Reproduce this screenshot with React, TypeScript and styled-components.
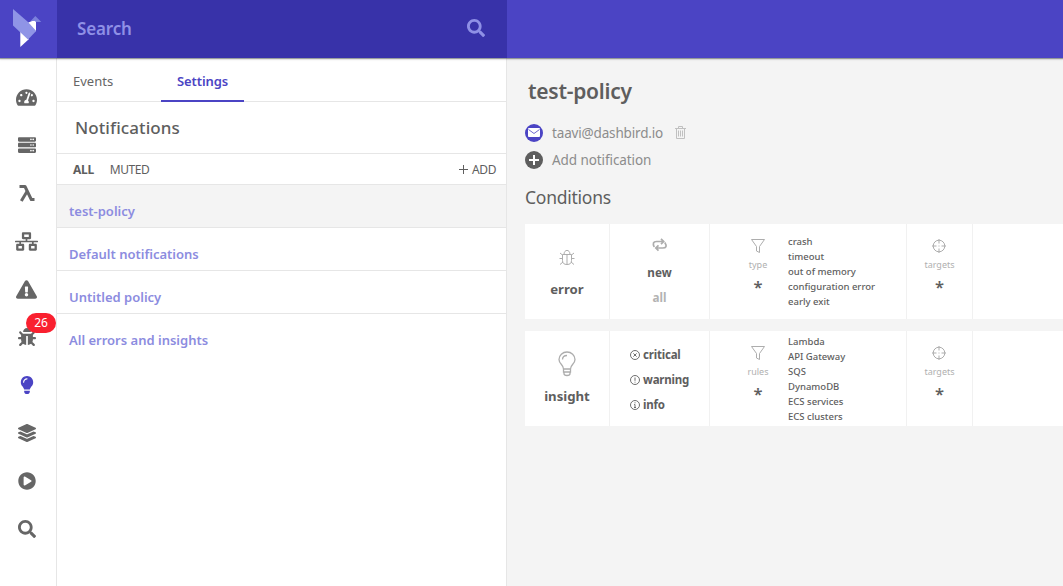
import React from "react";
import styled, { createGlobalStyle } from "styled-components";
import {
  FaTachometerAlt, FaServer, FaNetworkWired, FaExclamationTriangle, FaBug,
  FaLightbulb, FaLayerGroup, FaPlayCircle, FaSearch,
} from "react-icons/fa";

const GlobalStyle = createGlobalStyle`
  * { box-sizing: border-box; }
  html, body, #root { height: 100%; }
  body { margin: 0; overflow: hidden; background: #f4f4f4; color: #5e5e5e;
    font-family: "Noto Sans", "Open Sans", sans-serif; }
  svg { display: block; flex: none; }
`;

const Page = styled.div`
  height: 100vh;
  display: flex;
  flex-direction: column;
`;
const Header = styled.header`
  position: relative;
  z-index: 1;
  height: 58px;
  flex: none;
  display: flex;
  background: #4b44c4;
  box-shadow: 0 1px 1px rgba(70, 80, 80, 0.5), 0 2px 2px rgba(0, 0, 0, 0.08);
`;
const Brand = styled.div`
  width: 57px;
  padding: 9px 0 0 13px;
`;
const SearchBar = styled.div`
  width: 450px;
  display: flex;
  align-items: center;
  justify-content: space-between;
  padding: 0 22px 2px 20px;
  background: #3832a9;
  color: #8f90e6;
`;
const Body = styled.div`
  flex: 1;
  display: flex;
  min-height: 0;
`;
const Nav = styled.nav`
  width: 57px;
  padding: 15px 3px 0 0;
  border-right: 1px solid #e6e6e6;
  background: #fff;
`;
const NavItem = styled.a<{ $active?: boolean }>`
  position: relative;
  height: 48px;
  display: flex;
  align-items: center;
  justify-content: center;
  color: ${(p) => (p.$active ? "#4b44c4" : "#666")};
`;
const Badge = styled.span`
  position: absolute;
  left: 26px;
  top: 0;
  width: 30px;
  height: 20px;
  border-radius: 10px;
  background: #f9202f;
  color: #fff;
  font-size: 12px;
  line-height: 20px;
  text-align: center;
`;
const Sidebar = styled.aside`
  width: 450px;
  border-right: 1px solid #e6e6e6;
  background: #fff;
`;
const Tabs = styled.div`
  height: 44px;
  display: flex;
  border-bottom: 1px solid #e6e6e6;
`;
const Tab = styled.div<{ $active?: boolean }>`
  width: ${(p) => (p.$active ? 83 : 104)}px;
  height: 44px;
  padding: 0 16px;
  line-height: 44px;
  border-bottom: ${(p) => (p.$active ? "2px solid #4b44c4" : "0")};
  color: ${(p) => (p.$active ? "#4b44c4" : "#666")};
`;
const SectionTitle = styled.div`
  height: 52px;
  padding-left: 18px;
  line-height: 51px;
  border-bottom: 1px solid #e6e6e6;
`;
const Filters = styled.div`
  height: 31px;
  display: flex;
  gap: 16px;
  align-items: center;
  padding: 0 10px 0 16px;
  border-bottom: 1px solid #e6e6e6;
`;
const AddButton = styled.div`
  display: flex;
  align-items: center;
  gap: 4px;
  margin-left: auto;
`;
const PolicyRow = styled.div<{ $selected?: boolean; $last?: boolean }>`
  height: 43px;
  padding: 5px 12px 0;
  line-height: 41px;
  border-bottom: 1px solid ${(p) => (p.$last ? "transparent" : "#e6e6e6")};
  background: ${(p) => (p.$selected ? "#f4f4f4" : "#fff")};
  color: #8c8ce0;
`;
const Main = styled.main`
  flex: 1;
  min-width: 0;
  padding: 17px 0 0 18px;
`;
const PolicyTitle = styled.h1`
  margin: 0 0 12px 3px;
  height: 32px;
  line-height: 32px;
  font-size: 21px;
`;
const Contact = styled.div`
  height: 27px;
  display: flex;
  align-items: center;
  gap: 9px;
  color: #8c8c8c;
`;
const Remove = styled.span`
  margin-left: 3px;
`;
const Round = styled.span<{ $fill: string }>`
  width: 18px;
  height: 18px;
  border-radius: 50%;
  display: flex;
  align-items: center;
  justify-content: center;
  background: ${(p) => p.$fill};
`;
const ConditionsTitle = styled.h2`
  margin: 10px 0 13px;
  height: 28px;
  line-height: 28px;
  font-size: 17px;
`;
const Card = styled.section`
  height: 95px;
  margin-bottom: 12px;
  display: flex;
  background: #fff;
`;
const Cell = styled.div<{ $width: number; $top?: number }>`
  width: ${(p) => p.$width}px;
  padding-top: ${(p) => p.$top ?? 0}px;
  border-right: 1px solid #f1f1f1;
  display: flex;
  flex-direction: column;
  align-items: center;
`;
const SplitCell = styled(Cell)`
  flex-direction: row;
  align-items: flex-start;
`;
const FilterColumn = styled.div`
  width: 78px;
  padding: 14px 0 0 18px;
  display: flex;
  flex-direction: column;
  align-items: center;
`;
const RuleList = styled.div<{ $top: number }>`
  padding-top: ${(p) => p.$top}px;
  white-space: nowrap;
`;
const Severity = styled.div`
  height: 25px;
  width: 59px;
  display: flex;
  align-items: center;
  gap: 3px;
`;
const Line = styled.div<{ $h: number }>`
  height: ${(p) => p.$h}px;
  line-height: ${(p) => p.$h}px;
  font-size: 9px;
`;
const Text = styled.span<{ $size: number; $weight?: number; $track?: number; $color?: string }>`
  font-size: ${(p) => p.$size}px;
  font-weight: ${(p) => p.$weight ?? 400};
  letter-spacing: ${(p) => p.$track ?? 0}px;
  color: ${(p) => p.$color ?? "inherit"};
  white-space: nowrap;
`;

const Logo = () => (
  <svg width="30" height="39" viewBox="0 0 30 39">
    <path d="M7.300 21V38l8.700-8z" fill="#fff" />
    <path d="M14.500 14 20 11.500H23v11z" fill="#fff" />
    <path d="M0 0 15 13 23.200 22 15 30.500 0 16.500z" fill="#8f94e6" />
    <path d="M17.500 12.200 22.300 7 28.300 13H23l-1.500-1.200z" fill="#7b80dc" />
  </svg>
);
const Lambda = () => (
  <svg width="16" height="18" viewBox="0 0 16 18" fill="none" stroke="currentColor" strokeWidth="3">
    <path d="M.5 2.500H6L12.300 15.500H15.500" strokeLinejoin="round" />
    <path d="M8 7.500 2.300 17" />
  </svg>
);
const BugOutline = () => (
  <svg width="16" height="17" viewBox="0 0 16 17" fill="none" stroke="#adadad">
    <path d="M3.500 5.500h9v6q0 4-4.500 4t-4.500-4zM8 6v9.500M5 5.500C5 0 11 0 11 5.500M.5 9.500h3m9 0h3M1 4l2.500 2M15 4l-2.500 2M1 15.500 4 13m11 2.500L12 13" />
  </svg>
);
const Repeat = () => (
  <svg width="16" height="16" viewBox="0 0 16 16" fill="none" stroke="#adadad" strokeWidth="1.700">
    <path d="M2.200 10Q-.3 4.500 4.500 4.500H11M9 1.800l2.700 2.700L9 7.200M12.800 5.500Q16.300 11 10.500 11H4.500M6.500 8.300 3.800 11l2.700 2.700" />
  </svg>
);
const Bulb = () => (
  <svg width="18" height="26" viewBox="0 0 18 26" fill="none" stroke="#adadad" strokeWidth="1.300">
    <path d="M5.500 18C5.500 13.500 1 13 1 8.500a8 7.500 0 0 1 16 0c0 4.500-4.500 5-4.500 9.500zM4.500 8.500Q4.500 4.500 9 4.500M5.500 18v3h7v-3M6 21v1.800q0 1.700 3 1.700t3-1.700v-1.800" />
  </svg>
);
const Funnel = () => (
  <svg width="16" height="16" viewBox="0 0 16 16" fill="none" stroke="#adadad">
    <path d="M1.500 1.500h13L9.500 8.500v6l-3-1.500V8.500z" />
  </svg>
);
const Target = () => (
  <svg width="15" height="16" viewBox="0 0 15 16" fill="none" stroke="#adadad">
    <circle cx="7" cy="8" r="5.800" />
    <path d="M7 1v4.500M7 10.500V15M0 8h4.500M9.500 8H14M6.500 8h1" />
  </svg>
);
const LevelIcon = ({ mark }: { mark: string }) => (
  <svg width="10" height="10" viewBox="0 0 10 10" fill="none" stroke="#5e5e5e" strokeWidth=".9">
    <circle cx="5" cy="5" r="4.500" />
    <path d={mark} />
  </svg>
);
const Trash = () => (
  <svg width="11" height="13" viewBox="0 0 11 13" fill="none" stroke="#c0c0c0">
    <path d="M0 2.500h11M3.500 2.500v-2h4v2M1.500 2.500v10h8v-10M3.500 4.500v6M5.500 4.500v6M7.500 4.500v6" />
  </svg>
);
const Envelope = () => (
  <svg width="12" height="9" viewBox="0 0 12 9">
    <rect width="12" height="9" rx="1" fill="#fff" />
    <path d="m.5 1.500 5.500 4 5.500-4" fill="none" stroke="#4b44c4" strokeWidth=".8" />
  </svg>
);
const Plus = ({ size, width, color }: { size: number; width: number; color: string }) => (
  <svg width={size} height={size} viewBox={`0 0 ${size} ${size}`} stroke={color} strokeWidth={width}>
    <path d={`M0 ${size / 2}H${size}M${size / 2} 0V${size}`} />
  </svg>
);

const navItems = [
  { icon: <FaTachometerAlt size={21} /> },
  { icon: <FaServer size={18} /> },
  { icon: <Lambda /> },
  { icon: <FaNetworkWired size={23} /> },
  { icon: <FaExclamationTriangle size={21} /> },
  { icon: <FaBug size={18} />, badge: "26" },
  { icon: <FaLightbulb size={18} />, active: true },
  { icon: <FaLayerGroup size={18} /> },
  { icon: <FaPlayCircle size={18} /> },
  { icon: <FaSearch size={18} /> },
];
const policies = ["test-policy", "Default notifications", "Untitled policy", "All errors and insights"];
const levels = [
  { name: "critical", mark: "M3.400 3.400 6.600 6.600M6.600 3.400 3.400 6.600" },
  { name: "warning", mark: "M5 2.500V5.800M5 6.700V7.600" },
  { name: "info", mark: "M5 2.300V3.300M4.200 4.500H5V7.500M4 7.500H6" },
];

const Kind = ({ icon, name }: { icon: React.ReactNode; name: string }) => (
  <Cell $width={85} $top={name === "error" ? 25 : 20}>
    {icon}
    <Line $h={name === "error" ? 46 : 38}><Text $size={13.2} $weight={700}>{name}</Text></Line>
  </Cell>
);
const Match = ({ icon, name }: { icon: React.ReactNode; name: string }) => (
  <>
    {icon}
    <Line $h={22}><Text $size={9} $color="#b0b0b0">{name}</Text></Line>
    <Line $h={22}><Text $size={16.5} $weight={600}>*</Text></Line>
  </>
);
const Rules = ({ name, top, items }: { name: string; top: number; items: string[] }) => (
  <>
    <SplitCell $width={197}>
      <FilterColumn><Match icon={<Funnel />} name={name} /></FilterColumn>
      <RuleList $top={top}>
        {items.map((s) => <Line $h={15} key={s}><Text $size={9.5} $weight={500}>{s}</Text></Line>)}
      </RuleList>
    </SplitCell>
    <Cell $width={66} $top={14}><Match icon={<Target />} name="targets" /></Cell>
  </>
);

export default function App() {
  return (
    <Page>
      <GlobalStyle />
      <Header>
        <Brand><Logo /></Brand>
        <SearchBar>
          <Text $size={17} $weight={600} $track={-0.15}>Search</Text>
          <FaSearch size={18} />
        </SearchBar>
      </Header>
      <Body>
        <Nav>
          {navItems.map((n, i) => (
            <NavItem key={i} $active={n.active}>
              {n.icon}
              {n.badge && <Badge>{n.badge}</Badge>}
            </NavItem>
          ))}
        </Nav>
        <Sidebar>
          <Tabs>
            <Tab><Text $size={13}>Events</Text></Tab>
            <Tab $active><Text $size={13} $weight={600} $track={-0.1}>Settings</Text></Tab>
          </Tabs>
          <SectionTitle><Text $size={17} $weight={500} $track={0.08}>Notifications</Text></SectionTitle>
          <Filters>
            <Text $size={12} $weight={700} $track={-0.3}>ALL</Text>
            <Text $size={12} $track={-0.45}>MUTED</Text>
            <AddButton>
              <Plus size={9} width={1} color="#5e5e5e" />
              <Text $size={12} $track={-0.4}>ADD</Text>
            </AddButton>
          </Filters>
          {policies.map((p, i) => (
            <PolicyRow key={p} $selected={i === 0} $last={i === policies.length - 1}>
              <Text $size={13} $weight={600}>{p}</Text>
            </PolicyRow>
          ))}
        </Sidebar>
        <Main>
          <PolicyTitle><Text $size={21} $weight={600} $track={-0.25}>test-policy</Text></PolicyTitle>
          <Contact>
            <Round $fill="#4b44c4"><Envelope /></Round>
            <Text $size={13.5} $track={-0.16}>taavi@dashbird.io</Text>
            <Remove><Trash /></Remove>
          </Contact>
          <Contact>
            <Round $fill="#5e5e5e"><Plus size={10} width={2} color="#fff" /></Round>
            <Text $size={13.5} $track={-0.08}>Add notification</Text>
          </Contact>
          <ConditionsTitle><Text $size={17.5} $track={-0.25}>Conditions</Text></ConditionsTitle>
          <Card>
            <Kind icon={<BugOutline />} name="error" />
            <Cell $width={100} $top={13}>
              <Repeat />
              <Line $h={38}><Text $size={11.7} $weight={700}>new</Text></Line>
              <Line $h={13}><Text $size={11.7} $weight={700} $color="#b3b3b3">all</Text></Line>
            </Cell>
            <Rules name="type" top={10} items={["crash", "timeout", "out of memory", "configuration error", "early exit"]} />
          </Card>
          <Card>
            <Kind icon={<Bulb />} name="insight" />
            <Cell $width={100} $top={11}>
              {levels.map((l) => (
                <Severity key={l.name}>
                  <LevelIcon mark={l.mark} />
                  <Text $size={11.5} $weight={700} $track={-0.2}>{l.name}</Text>
                </Severity>
              ))}
            </Cell>
            <Rules name="rules" top={3} items={["Lambda", "API Gateway", "SQS", "DynamoDB", "ECS services", "ECS clusters"]} />
          </Card>
        </Main>
      </Body>
    </Page>
  );
}
